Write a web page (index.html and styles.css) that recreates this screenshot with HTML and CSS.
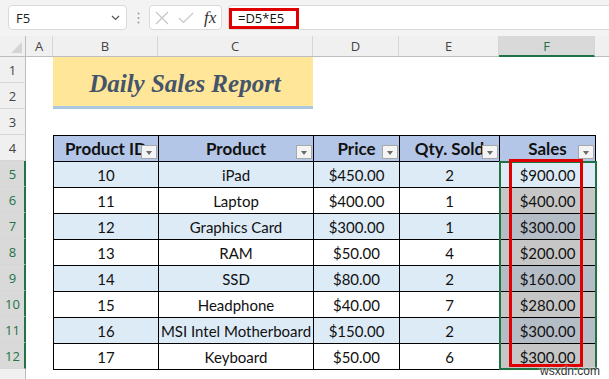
FILE: index.html
```html
<!DOCTYPE html>
<html lang="en">
<head>
    <meta charset="UTF-8">
    <title>Daily Sales Report</title>
    <link rel="stylesheet" href="styles.css">
</head>
<body>

    <!-- Formula Bar -->
    <div class="topbar">
        <div class="namebox">
            <span>F5</span>
            <svg width="9" height="6" viewBox="0 0 9 6"><polyline points="1,1 4.5,4.5 8,1" fill="none" stroke="#555" stroke-width="1.2"/></svg>
        </div>
        <div class="grip">
            <svg width="3" height="12" viewBox="0 0 3 12"><circle cx="1.5" cy="1.5" r="1" fill="#9a9a9a"/><circle cx="1.5" cy="6" r="1" fill="#9a9a9a"/><circle cx="1.5" cy="10.5" r="1" fill="#9a9a9a"/></svg>
        </div>
        <div class="fxbox">
            <svg width="14" height="14" viewBox="0 0 14 14"><path d="M1 1 L13 13 M13 1 L1 13" stroke="#c4c4c4" stroke-width="1.1" fill="none"/></svg>
            <svg width="16" height="12" viewBox="0 0 16 12"><polyline points="1,6 5.5,10.5 15,1" stroke="#c4c4c4" stroke-width="1.1" fill="none"/></svg>
            <span class="fx">fx</span>
        </div>
        <div class="formula">
            <span class="formula-text">=D5*E5</span>
        </div>
    </div>

    <!-- Column Headers -->
    <div class="colheads">
        <div class="ch corner"></div>
        <div class="ch w-a">A</div>
        <div class="ch w-b">B</div>
        <div class="ch w-c">C</div>
        <div class="ch w-d">D</div>
        <div class="ch w-e">E</div>
        <div class="ch w-f sel">F</div>
        <div class="ch rest"></div>
    </div>

    <div class="sheet">
        <!-- Row Headers -->
        <div class="rowheads">
            <div class="rh">1</div>
            <div class="rh">2</div>
            <div class="rh">3</div>
            <div class="rh">4</div>
            <div class="rh sel">5</div>
            <div class="rh sel">6</div>
            <div class="rh sel">7</div>
            <div class="rh sel">8</div>
            <div class="rh sel">9</div>
            <div class="rh sel">10</div>
            <div class="rh sel">11</div>
            <div class="rh sel">12</div>
            <div class="rh"></div>
        </div>

        <div class="cells">
            <div class="title">Daily Sales Report</div>

            <div class="table">
                <div class="c h">Product ID<span class="fb"></span></div>
                <div class="c h">Product<span class="fb"></span></div>
                <div class="c h">Price<span class="fb"></span></div>
                <div class="c h">Qty. Sold<span class="fb"></span></div>
                <div class="c h">Sales<span class="fb"></span></div>

                <div class="c alt">10</div><div class="c alt">iPad</div><div class="c alt">$450.00</div><div class="c alt">2</div><div class="c alt">$900.00</div>
                <div class="c">11</div><div class="c">Laptop</div><div class="c">$400.00</div><div class="c">1</div><div class="c s">$400.00</div>
                <div class="c alt">12</div><div class="c alt">Graphics Card</div><div class="c alt">$300.00</div><div class="c alt">1</div><div class="c alt s">$300.00</div>
                <div class="c">13</div><div class="c">RAM</div><div class="c">$50.00</div><div class="c">4</div><div class="c s">$200.00</div>
                <div class="c alt">14</div><div class="c alt">SSD</div><div class="c alt">$80.00</div><div class="c alt">2</div><div class="c alt s">$160.00</div>
                <div class="c">15</div><div class="c">Headphone</div><div class="c">$40.00</div><div class="c">7</div><div class="c s">$280.00</div>
                <div class="c alt">16</div><div class="c alt">MSI Intel Motherboard</div><div class="c alt">$150.00</div><div class="c alt">2</div><div class="c alt s">$300.00</div>
                <div class="c">17</div><div class="c">Keyboard</div><div class="c">$50.00</div><div class="c">6</div><div class="c s">$300.00</div>

                <!-- selection and highlight -->
                <div class="selrange"></div>
                <div class="redbox"></div>
            </div>
        </div>
    </div>

    <div class="watermark">wsxdn.com</div>

</body>
</html>
```

FILE: styles.css
```css
* {
    margin: 0;
    padding: 0;
    box-sizing: border-box;
}

body {
    width: 609px;
    height: 379px;
    overflow: hidden;
    background: #fff;
    font-family: "Lato", "Liberation Sans", sans-serif;
    position: relative;
}

/* Formula Bar */
.topbar {
    height: 36px;
    background: #f3f3f3;
    display: flex;
    align-items: flex-start;
    padding: 5px 0 0 8px;
}

.namebox {
    width: 119px;
    height: 25px;
    background: #fff;
    border: 1px solid #dadada;
    border-radius: 4px;
    display: flex;
    align-items: center;
    justify-content: space-between;
    padding: 0 6px 0 7px;
    font-family: "Open Sans", sans-serif;
    font-size: 13px;
    color: #222;
}

.grip {
    width: 22px;
    height: 25px;
    display: flex;
    align-items: center;
    justify-content: center;
}

.fxbox {
    width: 73px;
    height: 25px;
    background: #fff;
    border: 1px solid #dadada;
    border-radius: 4px;
    display: flex;
    align-items: center;
    gap: 9px;
    padding-left: 5px;
}

.fx {
    font-family: "Liberation Serif", serif;
    font-style: italic;
    font-size: 17px;
    color: #333;
    margin-left: 1px;
}

.formula {
    flex: 1;
    height: 25px;
    margin-left: 6px;
    background: #fff;
    border: 1px solid #dadada;
    border-right: none;
    border-radius: 4px 0 0 4px;
    padding: 1px 0 0 0;
}

.formula-text {
    display: inline-block;
    width: 70px;
    height: 21px;
    border: 3px solid #e00000;
    font-family: "Open Sans", sans-serif;
    font-size: 13px;
    line-height: 15px;
    padding-left: 6px;
    color: #111;
}

/* Column Headers */
.colheads {
    display: flex;
    height: 21px;
    background: #f0f0f0;
    border-bottom: 1px solid #bdbdbd;
}

.ch {
    border-right: 1px solid #d6d6d6;
    font-family: "Open Sans", sans-serif;
    font-size: 13px;
    color: #444;
    display: flex;
    align-items: center;
    justify-content: center;
}

.corner {
    width: 26px;
    position: relative;
    border-right-color: #bdbdbd;
}

.corner::after {
    content: "";
    position: absolute;
    right: 3px;
    bottom: 3px;
    border-left: 11px solid transparent;
    border-bottom: 11px solid #d4d4d4;
}

.w-a { width: 27px; }
.w-b { width: 105px; }
.w-c { width: 155px; }
.w-d { width: 86px; }
.w-e { width: 100px; }
.w-f { width: 96px; }
.rest { flex: 1; border-right: none; }

.ch.sel {
    background: #d9d9d9;
    color: #217346;
    border-bottom: 2px solid #217346;
    margin-bottom: -1px;
    padding-top: 1px;
}

/* Sheet body */
.sheet {
    display: flex;
    height: 322px;
}

.rowheads {
    width: 26px;
    background: #f0f0f0;
    display: flex;
    flex-direction: column;
}

.rh {
    height: 26px;
    flex-shrink: 0;
    border-bottom: 1px solid #d6d6d6;
    border-right: 1px solid #bdbdbd;
    font-family: "Open Sans", sans-serif;
    font-size: 13px;
    color: #444;
    display: flex;
    align-items: center;
    justify-content: center;
}

.rh.sel {
    background: #d9d9d9;
    color: #217346;
    border-right: 2px solid #217346;
    padding-left: 1px;
}

.cells {
    flex: 1;
    display: grid;
    grid-template-columns: 27px 105px 155px 86px 100px 96px 1fr;
    grid-template-rows: repeat(12, 26px) 1fr;
}

.title {
    grid-column: 2 / 4;
    grid-row: 1 / 3;
    background: #ffe699;
    border-bottom: 3px solid #adc7e1;
    display: flex;
    align-items: center;
    justify-content: center;
    padding: 4px 0 0 4px;
    font-family: "Liberation Serif", serif;
    font-style: italic;
    font-weight: bold;
    font-size: 25px;
    color: #44546a;
}

/* Table */
.table {
    grid-column: 2 / 7;
    grid-row: 4 / 13;
    width: 543px;
    height: 235px;
    display: grid;
    grid-template-columns: 104px 154px 85px 99px 95px;
    grid-auto-rows: 25px;
    gap: 1px;
    padding: 1px;
    background: #000;
    position: relative;
}

.c {
    background: #fff;
    display: flex;
    align-items: center;
    justify-content: center;
    font-size: 15px;
    color: #111;
    white-space: nowrap;
}

.c.alt { background: #ddebf7; }
.c.s { background: #c6c6c6; }
.c.alt.s { background: #b4bcc6; }

.c.h {
    background: #b4c6e7;
    font-weight: bold;
    font-size: 17px;
    position: relative;
    overflow: hidden;
}

/* Filter buttons */
.fb {
    position: absolute;
    right: 1px;
    bottom: 2px;
    width: 16px;
    height: 14px;
    background: #f4f4f4;
    border: 1px solid #a8a8a8;
}

.fb::after {
    content: "";
    position: absolute;
    left: 4px;
    top: 5px;
    border-left: 3.5px solid transparent;
    border-right: 3.5px solid transparent;
    border-top: 4px solid #6a6a6a;
}

.selrange {
    position: absolute;
    left: 446px;
    top: 26px;
    width: 98px;
    height: 209px;
    border: 2px solid #217346;
}

.redbox {
    position: absolute;
    left: 456px;
    top: 24px;
    width: 74px;
    height: 208px;
    border: 3px solid #e00000;
}

.watermark {
    position: absolute;
    left: 540px;
    top: 364px;
    font-family: "Liberation Sans", sans-serif;
    font-size: 12px;
    line-height: 14px;
    color: #333;
    text-shadow: 0 0 2px #fff, 0 0 2px #fff;
}
```
